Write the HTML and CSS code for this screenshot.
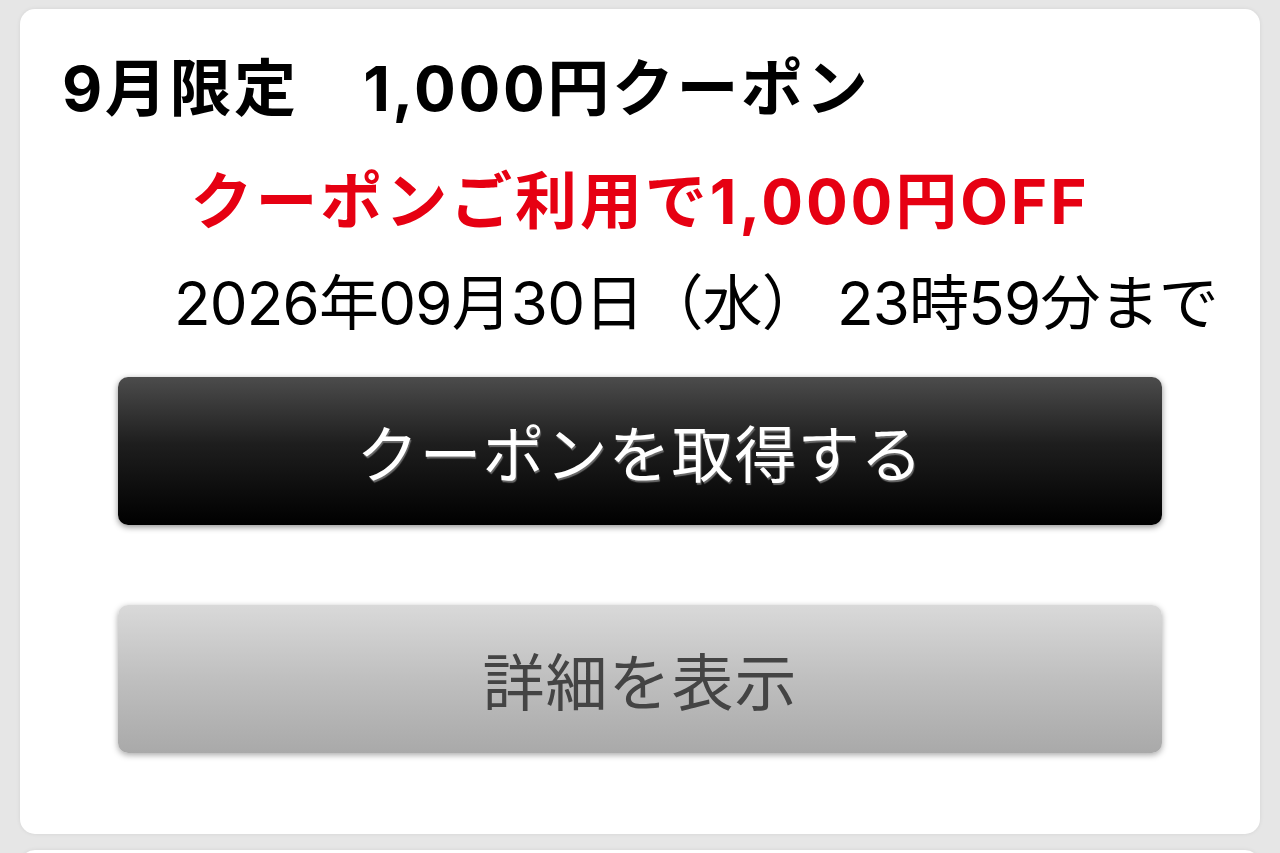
FILE: index.html
```html
<!DOCTYPE html>
<html lang="ja">
<head>
<meta charset="utf-8">
<title>クーポン</title>
<link rel="stylesheet" href="styles.css">
</head>
<body>
<div class="page">
  <section class="card">
    <h1 class="title">9月限定　1,000円クーポン</h1>
    <p class="offer">クーポンご利用で1,000円OFF</p>
    <p class="deadline">2026年09月30日（水） 23時59分まで</p>
    <div class="actions">
      <button class="btn btn-primary" type="button">クーポンを取得する</button>
      <button class="btn btn-secondary" type="button">詳細を表示</button>
    </div>
  </section>
  <div class="card card-next"></div>
</div>
</body>
</html>
```

FILE: styles.css
```css
* { box-sizing: border-box; }
html, body {
  margin: 0;
  padding: 0;
  background: #e6e6e6;
  height: 100%;
  overflow: hidden;
}
body {
  font-family: Inter, "Noto Sans CJK JP", sans-serif;
  color: #000;
}
.page {
  padding: 9px 20px 0 20px;
  display: flex;
  flex-direction: column;
  gap: 16px;
}
.card {
  background: #fff;
  border-radius: 15px;
  box-shadow: 0 0 4px rgba(0, 0, 0, 0.08);
  padding: 44px 42px 81px 42px;
  display: flex;
  flex-direction: column;
}
.card-next {
  height: 40px;
  padding: 0;
}
.title {
  margin: 0;
  font-size: 62px;
  font-weight: 700;
  line-height: 72px;
  letter-spacing: 2.6px;
}
.offer {
  margin: 41px 0 0 0;
  font-size: 62px;
  font-weight: 700;
  line-height: 72px;
  color: #e60012;
  text-align: center;
  letter-spacing: 2.9px;
}
.deadline {
  margin: 29px 0 0 0;
  font-size: 60px;
  font-weight: 400;
  line-height: 72px;
  text-align: right;
  letter-spacing: -0.8px;
}
.actions {
  margin: 38px 56px 0 56px;
  display: flex;
  flex-direction: column;
  gap: 80px;
}
.btn {
  height: 148px;
  border: none;
  border-radius: 10px;
  font-family: "Noto Sans CJK JP", sans-serif;
  font-size: 62px;
  font-weight: 400;
  letter-spacing: 1px;
  padding: 0;
  display: flex;
  align-items: center;
  justify-content: center;
}
.btn-primary {
  background: linear-gradient(to bottom, #4c4c4c 0%, #1e1e1e 45%, #000 100%);
  color: #fff;
  text-shadow: 1px 2px 1px #6a6a6a;
  box-shadow: 0 2px 6px rgba(0, 0, 0, 0.45);
}
.btn-secondary {
  background: linear-gradient(to bottom, #d9d9d9 0%, #bfbfbf 50%, #a9a9a9 100%);
  color: #444;
  box-shadow: 0 2px 6px rgba(0, 0, 0, 0.35);
}
```
